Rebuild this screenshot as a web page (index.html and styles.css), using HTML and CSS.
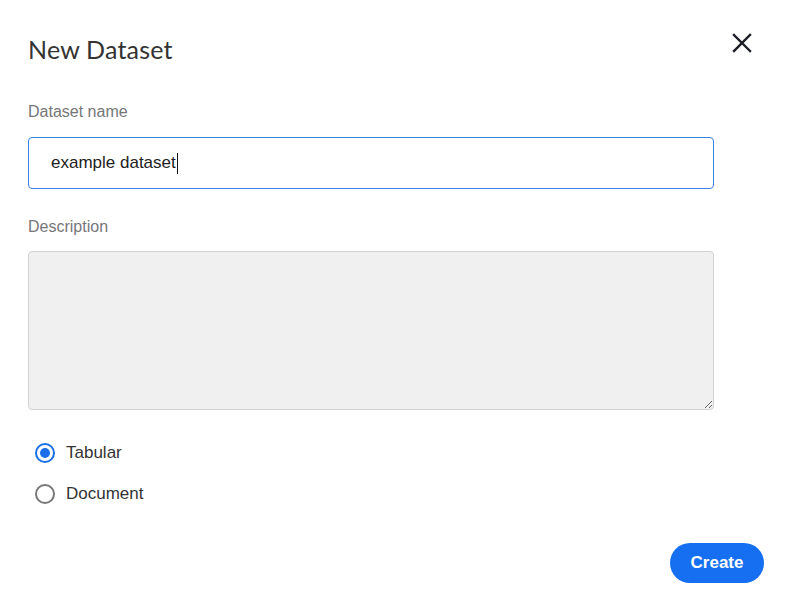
FILE: index.html
```html
<!DOCTYPE html>
<html lang="en">
<head>
  <meta charset="UTF-8">
  <title>New Dataset</title>
  <link rel="stylesheet" href="styles.css">
</head>
<body>
  <div class="dialog">
    <div class="dialog-header">
      <h2>New Dataset</h2>
      <button class="close-btn" aria-label="Close">
        <svg width="20" height="20" viewBox="0 0 20 20">
          <path d="M2 2 L18 18 M18 2 L2 18" stroke="#1b1d26" stroke-width="2.4" stroke-linecap="square"/>
        </svg>
      </button>
    </div>

    <div class="field">
      <label for="name">Dataset name</label>
      <div class="text-input">example dataset<span class="caret"></span></div>
    </div>

    <div class="field">
      <label for="desc">Description</label>
      <textarea id="desc" class="desc-input"></textarea>
    </div>

    <div class="radio-group">
      <label class="radio-row"><span class="radio checked"></span>Tabular</label>
      <label class="radio-row"><span class="radio"></span>Document</label>
    </div>

    <div class="dialog-footer">
      <button class="create-btn">Create</button>
    </div>
  </div>
</body>
</html>
```

FILE: styles.css
```css
body {
  margin: 0;
  background: #fff;
  font-family: "Liberation Sans", Arial, sans-serif;
}
.dialog {
  width: 793px;
  height: 613px;
  box-sizing: border-box;
  padding: 29px 29px 0 28px;
}
.dialog-header {
  display: flex;
  justify-content: space-between;
  align-items: flex-start;
}
.dialog-header h2 {
  margin: 5px 0 0;
  font-family: "Lato", "Noto Sans", sans-serif;
  font-weight: 400;
  font-size: 25px;
  color: #333;
  letter-spacing: 0.2px;
}
.close-btn {
  background: none;
  border: none;
  padding: 0;
  margin: 4px 12px 0 0;
  width: 20px;
  height: 20px;
  cursor: pointer;
}
.close-btn svg {
  display: block;
}
.field {
  width: 686px;
}
.field label {
  display: block;
  font-size: 16px;
  color: #75767a;
  margin: 39px 0 16px;
}
.text-input {
  box-sizing: border-box;
  height: 52px;
  border: 1px solid #3b82e6;
  border-radius: 4px;
  padding: 0 22px;
  display: flex;
  align-items: center;
  font-size: 17px;
  color: #222;
}
.caret {
  display: inline-block;
  width: 1px;
  height: 21px;
  background: #111;
  margin-left: 1px;
}
.field + .field label {
  margin-top: 29px;
  margin-bottom: 15px;
}
.desc-input {
  display: block;
  box-sizing: border-box;
  width: 686px;
  height: 159px;
  margin: 0;
  background: #f0f0f0;
  border: 1px solid #d2d2d2;
  border-radius: 4px;
  font-family: inherit;
}
.radio-group {
  margin-top: 33px;
  display: flex;
  flex-direction: column;
  gap: 21px;
  padding-left: 7px;
}
.radio-row {
  display: flex;
  align-items: center;
  font-size: 17px;
  color: #333;
  gap: 11px;
  height: 20px;
}
.radio {
  box-sizing: border-box;
  width: 20px;
  height: 20px;
  border-radius: 50%;
  border: 2px solid #777;
  position: relative;
}
.radio.checked {
  border-color: #1a6fe8;
}
.radio.checked::after {
  content: "";
  position: absolute;
  left: 3px;
  top: 3px;
  width: 10px;
  height: 10px;
  border-radius: 50%;
  background: #1a6fe8;
}
.dialog-footer {
  display: flex;
  justify-content: flex-end;
  margin-top: 39px;
}
.create-btn {
  width: 94px;
  height: 40px;
  border: none;
  border-radius: 20px;
  background: #166ff0;
  color: #fff;
  font-family: "Liberation Sans", Arial, sans-serif;
  font-weight: bold;
  font-size: 17px;
  cursor: pointer;
}
```
